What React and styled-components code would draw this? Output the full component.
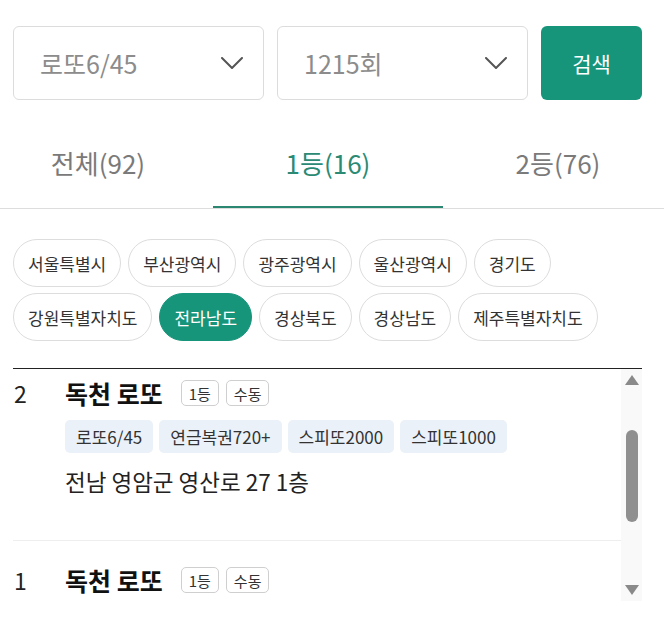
import React, { useLayoutEffect, useRef, useState } from "react";
import styled, { createGlobalStyle } from "styled-components";

const FONT = `"Noto Sans CJK KR", "Noto Sans", sans-serif`;
const TEAL = "#17957b";

const GlobalStyle = createGlobalStyle`
  body {
    margin: 0;
    background: #fff;
    font-family: ${FONT};
    color: #222;
  }
`;

const Page = styled.div`
  width: 100%;
  overflow: hidden;
`;

const Toolbar = styled.div`
  display: flex;
  gap: 13px;
  padding: 26px 22px 0 13px;
`;

const SelectBox = styled.button`
  flex: 1;
  height: 74px;
  display: flex;
  align-items: center;
  justify-content: space-between;
  padding: 0 20px 0 26px;
  background: #fff;
  border: 1px solid #dcdcdc;
  border-radius: 6px;
  font-family: ${FONT};
  font-size: 25px;
  color: #8c8c8c;
  cursor: pointer;
`;

const SearchButton = styled.button`
  flex: 0 0 101px;
  height: 74px;
  border: none;
  border-radius: 6px;
  background: ${TEAL};
  color: #fff;
  font-family: ${FONT};
  font-size: 21px;
  font-weight: 400;
  cursor: pointer;
`;

const TabBar = styled.div`
  display: flex;
  justify-content: center;
  margin-top: 18px;
  padding-right: 8px;
  border-bottom: 1px solid #dddddd;
  overflow: hidden;
`;

const Tab = styled.button`
  flex: 0 0 230px;
  height: 91px;
  margin-bottom: -1px;
  background: none;
  border: none;
  border-bottom: 3px solid ${(p) => (p.$active ? "#2b8672" : "transparent")};
  font-family: ${FONT};
  font-size: 26px;
  font-weight: 400;
  color: ${(p) => (p.$active ? "#2b8a74" : "#7a7a7a")};
  cursor: pointer;
`;

const Section = styled.div`
  padding: 0 22px 0 13px;
`;

const ChipWrap = styled.div`
  display: flex;
  flex-wrap: wrap;
  gap: 6px 7px;
  margin-top: 30px;
`;

const Chip = styled.button`
  height: 48px;
  padding: 0 14px;
  border-radius: 24px;
  border: 1px solid ${(p) => (p.$active ? TEAL : "#dddddd")};
  background: ${(p) => (p.$active ? TEAL : "#fff")};
  color: ${(p) => (p.$active ? "#fff" : "#333")};
  font-family: ${FONT};
  font-size: 17px;
  cursor: pointer;
`;

const ListFrame = styled.div`
  margin-top: 27px;
  height: 233px;
  box-sizing: border-box;
  border-top: 1px solid #222;
  display: flex;
`;

const ListScroll = styled.div`
  flex: 1;
  overflow-y: auto;
  scrollbar-width: none;
  &::-webkit-scrollbar {
    display: none;
  }
`;

const ScrollTrack = styled.div`
  flex: 0 0 21px;
  display: flex;
  flex-direction: column;
  align-items: center;
  background: #f9f9f9;
`;

const Arrow = styled.span`
  width: 0;
  height: 0;
  border-left: 7.5px solid transparent;
  border-right: 7.5px solid transparent;
  ${(p) =>
    p.$down
      ? `border-top: 10px solid #8a8a8a; margin: auto 0 6px;`
      : `border-bottom: 10px solid #8a8a8a; margin-top: 6px;`}
`;

const Thumb = styled.span`
  width: 12px;
  height: 92px;
  margin-top: 45px;
  border-radius: 6px;
  background: #8f8f8f;
`;

const Item = styled.div`
  display: grid;
  grid-template-columns: 51px 1fr;
  padding: 28px 0 45px 1px;
  & + & {
    border-top: 1px solid #eeeeee;
    padding-top: 26px;
  }
`;

const Rank = styled.div`
  font-size: 23px;
  font-weight: 400;
  line-height: 26px;
  color: #222;
`;

const Body = styled.div`
  display: flex;
  flex-direction: column;
`;

const TitleRow = styled.div`
  display: flex;
  align-items: center;
  height: 26px;
`;

const StoreName = styled.span`
  font-size: 25px;
  font-weight: 700;
  color: #111;
  margin-right: 18px;
`;

const Badge = styled.span`
  height: 26px;
  box-sizing: border-box;
  display: inline-flex;
  align-items: center;
  padding: 0 7px;
  margin-right: 7px;
  border: 1px solid #cfcfcf;
  border-radius: 5px;
  font-size: 15px;
  color: #333;
`;

const TagRow = styled.div`
  display: flex;
  gap: 6px;
  margin-top: 14px;
`;

const Tag = styled.span`
  height: 33px;
  display: inline-flex;
  align-items: center;
  padding: 0 11px;
  border-radius: 5px;
  background: #ebf1f8;
  font-size: 17px;
  color: #333;
`;

const Address = styled.div`
  margin-top: 14px;
  font-size: 22.5px;
  line-height: 28px;
  color: #222;
`;

const Chevron = () => (
  <svg width="22" height="12" viewBox="0 0 22 12" fill="none">
    <path d="M1 1l10 10L21 1" stroke="#555" strokeWidth="2" strokeLinecap="round" strokeLinejoin="round" />
  </svg>
);

const REGIONS = [
  "서울특별시",
  "부산광역시",
  "광주광역시",
  "울산광역시",
  "경기도",
  "강원특별자치도",
  "전라남도",
  "경상북도",
  "경상남도",
  "제주특별자치도",
];

const TABS = ["전체(92)", "1등(16)", "2등(76)"];

const STORES = [
  {
    rank: 2,
    name: "독천 로또",
    badges: ["1등", "수동"],
    games: ["로또6/45", "연금복권720+", "스피또2000", "스피또1000"],
    address: "전남 영암군 영산로 27 1층",
  },
  {
    rank: 1,
    name: "독천 로또",
    badges: ["1등", "수동"],
    games: ["로또6/45", "연금복권720+", "스피또2000", "스피또1000"],
    address: "전남 영암군 영산로 27 1층",
  },
];

export default function App() {
  const [tab, setTab] = useState(1);
  const [region, setRegion] = useState("전라남도");
  const listRef = useRef(null);

  useLayoutEffect(() => {
    if (listRef.current) listRef.current.scrollTop = 17;
  }, []);

  return (
    <Page>
      <GlobalStyle />
      <Toolbar>
        <SelectBox>
          로또6/45
          <Chevron />
        </SelectBox>
        <SelectBox>
          1215회
          <Chevron />
        </SelectBox>
        <SearchButton>검색</SearchButton>
      </Toolbar>

      <TabBar>
        {TABS.map((t, i) => (
          <Tab key={t} $active={i === tab} onClick={() => setTab(i)}>
            {t}
          </Tab>
        ))}
      </TabBar>

      <Section>
        <ChipWrap>
          {REGIONS.map((r) => (
            <Chip key={r} $active={r === region} onClick={() => setRegion(r)}>
              {r}
            </Chip>
          ))}
        </ChipWrap>

        <ListFrame>
          <ListScroll ref={listRef}>
            {STORES.map((s) => (
              <Item key={s.rank}>
                <Rank>{s.rank}</Rank>
                <Body>
                  <TitleRow>
                    <StoreName>{s.name}</StoreName>
                    {s.badges.map((b) => (
                      <Badge key={b}>{b}</Badge>
                    ))}
                  </TitleRow>
                  <TagRow>
                    {s.games.map((g) => (
                      <Tag key={g}>{g}</Tag>
                    ))}
                  </TagRow>
                  <Address>{s.address}</Address>
                </Body>
              </Item>
            ))}
          </ListScroll>
          <ScrollTrack>
            <Arrow />
            <Thumb />
            <Arrow $down />
          </ScrollTrack>
        </ListFrame>
      </Section>
    </Page>
  );
}
